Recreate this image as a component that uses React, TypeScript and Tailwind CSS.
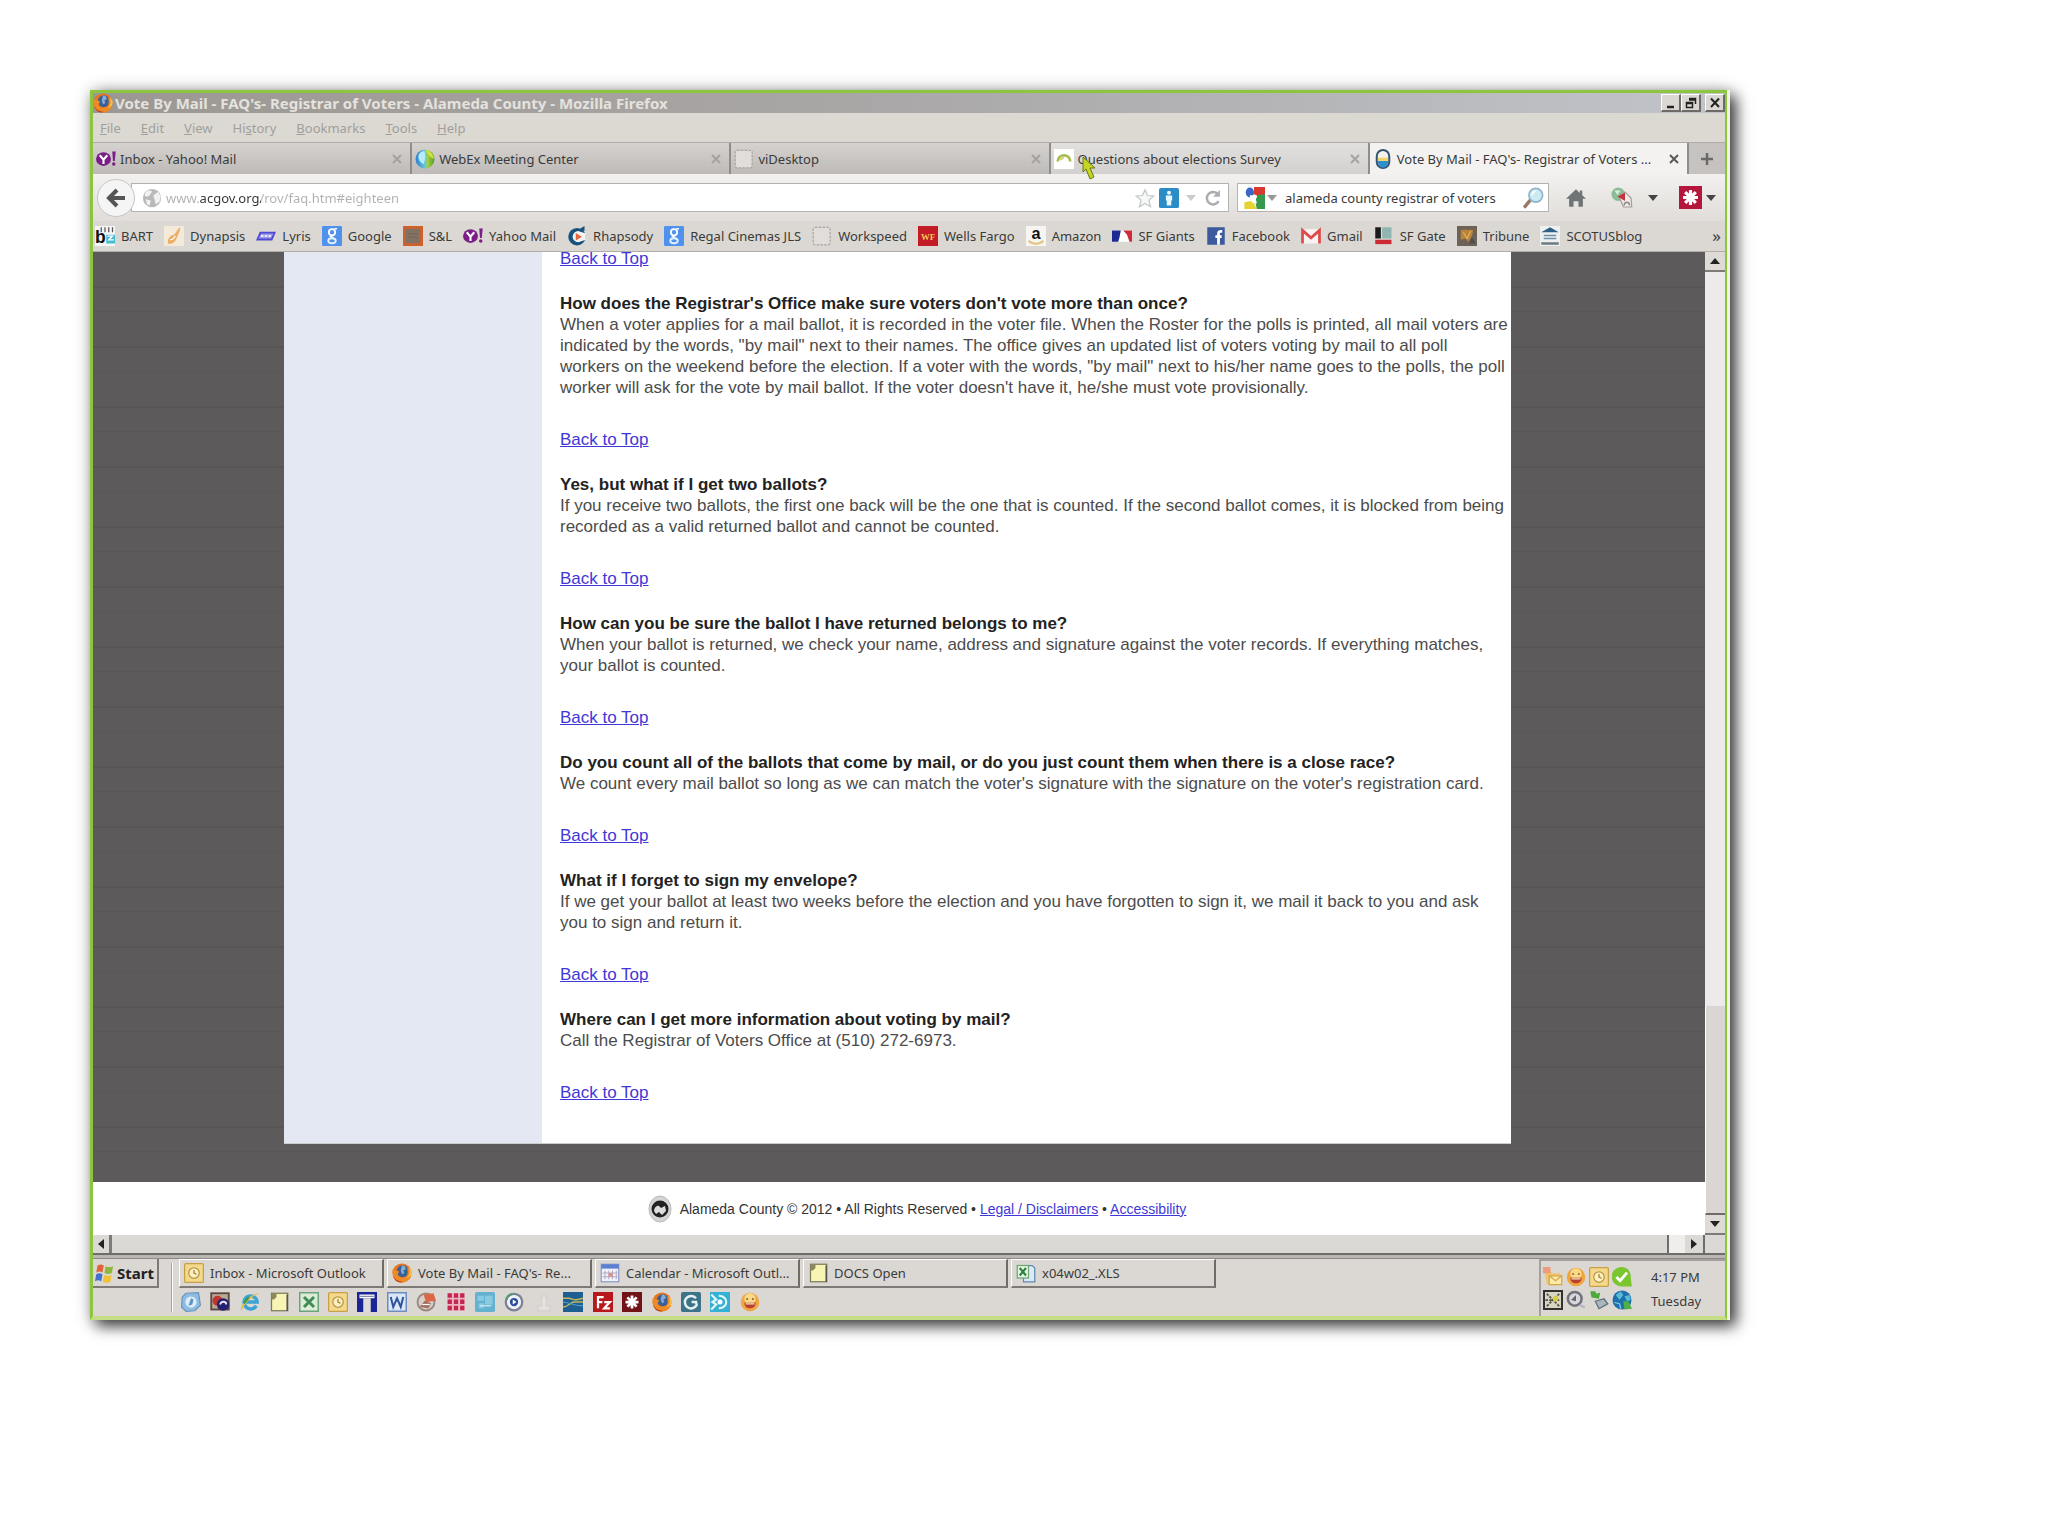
import React from "react";

type IconProps = { className?: string };

function Svg({ className = "size-5", children }: { className?: string; children: React.ReactNode }) {
  return (
    <svg viewBox="0 0 16 16" className={`${className} shrink-0`} aria-hidden="true">
      {children}
    </svg>
  );
}

const FirefoxIcon = ({ className }: IconProps) => (
  <Svg className={className}>
    <circle cx="8" cy="8" r="7.6" fill="#e8741c" />
    <circle cx="8.6" cy="6.6" r="4.8" fill="#3d5f98" />
    <path d="M8 2c2 0 3 1 3 3l-2 1 1 2-2 1-1-3z" fill="#84aed2" />
    <path d="M.5 5c1 1 2 0 3 1l2 .6c.6 1-1 1.400-1 2.600.6 2.600 4 3.400 6.600 1.800C12.600 10 13 7 12 3.600c3 2 4 5 2.800 7.800-2 4-8 5.600-12 2.600C.6 12 .2 8 .5 5z" fill="#ef8b26" />
    <path d="M12.500 3c2.600 2.500 2 7-1 9 2.600-.3 4.300-2 4.200-5-.3-1.600-1.400-3.200-3.200-4z" fill="#f6c14a" />
    <path d="M1 10c1 3 4 5 8 5-3 1.500-7 0-8-5z" fill="#bb3b1c" />
  </Svg>
);

const YahooIcon = ({ className }: IconProps) => (
  <Svg className={className}>
    <ellipse cx="6" cy="8" rx="6" ry="5.500" fill="#7b1f86" />
    <path d="M3 5l3 3.500L9 5M6 8.500V12" stroke="#fff" strokeWidth="1.700" fill="none" />
    <path d="M13 2h2.800l-.8 7.500h-1.400z" fill="#7b1f86" />
    <circle cx="14.200" cy="12" r="1.400" fill="#7b1f86" />
  </Svg>
);

const WebexIcon = () => (
  <Svg>
    <defs>
      <linearGradient id="webex" x1="0" x2="1">
        <stop offset="0" stopColor="#2f7fd0" />
        <stop offset=".5" stopColor="#6cc6d8" />
        <stop offset=".65" stopColor="#a5cf3a" />
        <stop offset="1" stopColor="#4f9e2c" />
      </linearGradient>
    </defs>
    <circle cx="8" cy="8" r="7.600" fill="url(#webex)" />
    <path d="M8.500 .6c4 .6 6.500 4 6.500 7.400-2-1-5-3-6.500-7.400z" fill="#cfe23f" />
    <path d="M3 4.500c1-2 3-3 4.500-3 1.300 3 .8 7-.5 10.500C4 11 2 7.500 3 4.500z" fill="#b7ecf6" />
  </Svg>
);

const BlankIcon = () => (
  <Svg>
    <rect x="1" y="1" width="13.500" height="14" rx="1.500" fill="#e0ddda" stroke="#a9a6a2" strokeDasharray="2 1" />
  </Svg>
);

const SurveyIcon = () => (
  <Svg>
    <rect width="16" height="16" fill="#fff" />
    <path d="M3 10a5 5 0 0 1 10 0" fill="none" stroke="#a9bd52" strokeWidth="2.200" />
    <path d="M5 9a4 4 0 0 1 3-2" fill="none" stroke="#d9c95c" strokeWidth="1.400" />
  </Svg>
);

const CountyIcon = () => (
  <Svg>
    <rect x="3" y=".8" width="10" height="14.400" rx="5" fill="#f4f2ea" stroke="#345473" strokeWidth="1.600" />
    <path d="M4 7h8v2.500H4z" fill="#f0d269" />
    <path d="M4 9.500h8V11a4 4 0 0 1-8 0z" fill="#2e8fc8" />
  </Svg>
);

const GlobeIcon = () => (
  <Svg>
    <circle cx="8" cy="8" r="7.300" fill="#b9b9b9" />
    <path d="M3 3c2-1 4-1.500 5 0L6 6 4 7 2 6zM9 6l4-3 2 4-1 4-3 2-1-4zM3 9l4 1-1 4-2-1z" fill="#f1f1f1" />
  </Svg>
);

const BartIcon = () => (
  <Svg>
    <rect width="16" height="16" fill="#f6f6f6" />
    <path d="M9 7h7v7H9z" fill="#45bcd0" />
    <path d="M5 1v4M8 1v4M11 1v4M14 1v4" stroke="#555" />
    <text x="0" y="13.500" fontSize="14" fontWeight="700" fontFamily="Liberation Sans" fill="#111">b</text>
    <path d="M10 8h4l-3 3h4" stroke="#fff" fill="none" />
  </Svg>
);
const DynapsisIcon = () => (
  <Svg>
    <rect width="16" height="16" fill="#f4ead9" />
    <path d="M13 1c-2 1-3 4-5 6-3 0-5 3-5 7 3 1 6-1 7-4 1-3 3-5 3-9z" fill="#edae65" />
    <path d="M5 11c2 0 3-1 4-3" stroke="#fff" fill="none" />
  </Svg>
);
const LyrisIcon = () => (
  <Svg>
    <path d="M3 4.500h13l-3 7H0z" fill="#5048d0" />
    <path d="M4 6h10l-2 4H2z" fill="#9c98ec" />
    <path d="M4 8h8" stroke="#e9e8ff" strokeWidth="1.500" strokeDasharray="2 1" />
  </Svg>
);
const GoogleIcon = () => (
  <Svg>
    <rect width="16" height="16" rx="1" fill="#4f92ee" />
    <circle cx="8" cy="5" r="2.500" fill="none" stroke="#fff" strokeWidth="1.500" />
    <path d="M10 2.200h2M9 7.500L7 8.500l3 2" stroke="#fff" strokeWidth="1.300" fill="none" />
    <ellipse cx="8" cy="11.800" rx="3" ry="2" fill="none" stroke="#e4efff" strokeWidth="1.500" />
  </Svg>
);
const SlIcon = () => (
  <Svg>
    <rect x="1" y="1" width="14" height="14" fill="#827264" stroke="#d1602a" strokeWidth="2.500" />
    <path d="M4 6h8M4 9h8" stroke="#75675c" />
  </Svg>
);
const RhapsodyIcon = () => (
  <Svg>
    <circle cx="8" cy="8.500" r="7" fill="#17527e" />
    <path d="M9 3l5-3v4z" fill="#17527e" />
    <path d="M9 4a4.500 4.500 0 1 0 0 9l6-2V6z" fill="#f2f4f4" />
    <path d="M7 5.500l5 3-5 3z" fill="#e5653d" />
  </Svg>
);
const WellsIcon = () => (
  <Svg>
    <rect width="16" height="16" fill="#c41c26" />
    <text x="8" y="11" fontSize="7" fontWeight="700" textAnchor="middle" fontFamily="Liberation Serif" fill="#f3cb52">WF</text>
  </Svg>
);
const AmazonIcon = () => (
  <Svg>
    <rect width="16" height="16" fill="#f7f5f1" />
    <text x="8" y="10" fontSize="13" fontWeight="700" textAnchor="middle" fontFamily="Liberation Sans" fill="#111">a</text>
    <path d="M2 12c4 3 8 3 12 0" stroke="#e4c685" strokeWidth="1.800" fill="none" />
  </Svg>
);
const MlbIcon = () => (
  <Svg>
    <rect y="3.500" width="16" height="9" rx="1" fill="#fff" />
    <path d="M0 3.500h7L6 9l-1 3.500H0z" fill="#1d2a91" />
    <path d="M9 3.500h7v9h-2L12 7z" fill="#d02b3c" />
  </Svg>
);
const FacebookIcon = () => (
  <Svg>
    <rect x="1" y="1" width="14" height="14" fill="#3d5a9c" />
    <path d="M13 4.200h-1.200C10.500 4.200 10 5 10 6v9M7.500 8.500h5" stroke="#fff" strokeWidth="2.200" fill="none" />
  </Svg>
);
const GmailIcon = () => (
  <Svg>
    <rect y="2.500" width="16" height="11.500" fill="#f8f3f2" />
    <path d="M1.200 14V3.500L8 9.500l6.800-6V14" stroke="#db4a4c" strokeWidth="2.200" fill="none" />
  </Svg>
);
const SfGateIcon = () => (
  <Svg>
    <rect x="1" y="1" width="4.500" height="9" fill="#1b1b1b" />
    <rect x="6.500" y="1" width="7.500" height="9" fill="#8fb6b3" />
    <rect x="1" y="11" width="13" height="3.500" fill="#cc2a33" />
  </Svg>
);
const TribuneIcon = () => (
  <Svg>
    <rect width="16" height="16" fill="#6c6258" />
    <path d="M3 3h10l-1 5-3 5-2-3-4 1z" fill="#b98438" />
    <path d="M5 5l3 5 3-6" stroke="#e1b25d" fill="none" />
    <path d="M12 9l3 5h-5z" fill="#4d4d4d" />
  </Svg>
);
const ScotusIcon = () => (
  <Svg>
    <rect width="16" height="16" fill="#eef0f0" />
    <path d="M1 5l7-4 7 4z" fill="#2f5f88" />
    <path d="M3 7.500h10M3 10h10" stroke="#6d8ea8" strokeWidth="1.200" />
    <path d="M1 13h14v2H1z" fill="#6d7a80" />
  </Svg>
);

const StarIcon = () => (
  <Svg>
    <path d="M8 1.500l2 4.500 5 .5-3.800 3.300L12.400 15 8 12.300 3.600 15l1.200-5.200L1 6.500 6 6z" fill="#f6f8f7" stroke="#c3c9c8" />
  </Svg>
);
const InfoIcon = () => (
  <Svg>
    <rect width="16" height="16" rx="1.500" fill="#2c8dc6" />
    <circle cx="8" cy="3.700" r="1.600" fill="#e8f8fc" />
    <path d="M5.500 6h5v4H9.800v4H6.200v-4h-.7z" fill="#e8f8fc" />
  </Svg>
);
const ReloadIcon = () => (
  <Svg>
    <path d="M12.500 10.500A5 5 0 1 1 12 5" stroke="#adadad" strokeWidth="2" fill="none" />
    <path d="M13.500 1.500V7H8z" fill="#adadad" />
  </Svg>
);
const GoogleSearchIcon = () => (
  <Svg className="size-[22px]">
    <rect width="16" height="16" fill="#fff" />
    <path d="M8 0h8v6l-4 2-4-3z" fill="#d9392f" />
    <path d="M10 6l6-1v11h-6l-1-5z" fill="#35984b" />
    <path d="M1 11l6-1 3 6H1z" fill="#e5d331" />
    <ellipse cx="5" cy="4" rx="3" ry="3.600" fill="#3a66c9" />
    <path d="M7 8c2 0 3 2 3 4l-4-1zM5 6h5v2H5z" fill="#fff" />
  </Svg>
);
const MagnifierIcon = () => (
  <Svg className="size-[22px]">
    <path d="M1.500 15l5-6" stroke="#9a7765" strokeWidth="2.400" />
    <circle cx="10" cy="6" r="5" fill="#cdeaf4" stroke="#8fb5c8" strokeWidth="1.200" />
    <path d="M7.500 6c0-2 1-2.800 2.500-3" stroke="#fff" strokeWidth="1.200" fill="none" />
  </Svg>
);
const HomeIcon = () => (
  <Svg>
    <path d="M8 1L0 8.500h2.500V15H6v-4.500h4V15h3.500V8.500H16L13 5.700V2h-2v1.900z" fill="#6f7476" />
  </Svg>
);
const PageToolIcon = () => (
  <Svg className="size-6">
    <circle cx="5.500" cy="5.500" r="4.500" fill="#8cbd97" />
    <path d="M3 3h4l-2 3z" fill="#d8efdc" />
    <path d="M6 7l4-3 4 4 .5 6H9z" fill="#efeceb" stroke="#a39d9b" strokeWidth=".8" />
    <path d="M5 7l5-2.500V10z" fill="#c5343c" />
    <path d="M9.500 13c0-3 3.500-3 3.500 0" stroke="#908c8c" fill="none" />
  </Svg>
);
const StarburstIcon = ({ className = "size-5", tone = "#b5173c" }: { className?: string; tone?: string }) => (
  <Svg className={className}>
    <rect width="16" height="16" fill={tone} />
    <path d="M8 2.800v10.400M2.800 8h10.400M4.300 4.300l7.400 7.400M11.700 4.300l-7.400 7.400" stroke="#fff" strokeWidth="2.200" />
  </Svg>
);
const Caret = ({ className = "text-[#444]" }: IconProps) => (
  <svg viewBox="0 0 10 6" className={`${className} h-[6px] w-[10px] shrink-0`} aria-hidden="true">
    <path d="M0 0h10L5 6z" fill="currentColor" />
  </svg>
);

const OutlookIcon = () => (
  <Svg>
    <rect x=".5" y=".5" width="15" height="15" rx="1" fill="#f3d98c" stroke="#c99f48" />
    <circle cx="8" cy="8" r="4.200" fill="#fbf0c4" stroke="#bd9641" />
    <path d="M8 5.500V8l2 1" stroke="#a67c2c" fill="none" />
  </Svg>
);
const CalendarIcon = () => (
  <Svg>
    <rect x="1" y="1" width="14" height="14" fill="#f0f3fb" stroke="#8a9cc8" />
    <rect x="1" y="1" width="14" height="3.500" fill="#5b80cf" />
    <path d="M4 6v7M7 6v7M10 6v7M13 6v7M2 8h12M2 11h12" stroke="#b3a9bf" strokeWidth=".8" />
    <path d="M7 8h3v3H7z" fill="#e28c87" />
  </Svg>
);
const DocsIcon = () => (
  <Svg>
    <rect x="2" y="1" width="13" height="14" fill="#f8f5b4" stroke="#7d7a5c" />
    <path d="M2 1h4v3l-2 2H2z" fill="#8b8a5c" />
    <path d="M14.500 2v13" stroke="#444" />
  </Svg>
);
const XlsIcon = () => (
  <Svg>
    <path d="M6 2h7l2 2v11H6z" fill="#dfe9f5" stroke="#5c8ab6" />
    <rect x="1" y="2" width="9" height="10" fill="#e7f4e4" stroke="#6aa873" />
    <path d="M3 4l5 6M8 4l-5 6" stroke="#2e8240" strokeWidth="1.700" />
  </Svg>
);
const ExcelIcon = () => (
  <Svg>
    <rect x=".6" y=".6" width="14.800" height="14.800" fill="#dcecd9" stroke="#6ba37b" strokeWidth="1.200" />
    <path d="M4 4l8 8M12 4l-8 8" stroke="#3f8c55" strokeWidth="2.400" />
  </Svg>
);
const WordIcon = () => (
  <Svg>
    <rect x=".6" y=".6" width="14.800" height="14.800" fill="#dbe6f6" stroke="#6d8cc0" strokeWidth="1.200" />
    <path d="M3 4l2 8 3-7 3 7 2-8" stroke="#2c539c" strokeWidth="1.600" fill="none" />
  </Svg>
);
const WindowsIcon = () => (
  <Svg>
    <path d="M2 2c2-1 3-1 5 0L6 7.500c-2-1-3-1-5 0z" fill="#e0653a" />
    <path d="M8.500 2.500c2 1 4 1 6 0L13.500 8c-2 1-4 1-6 0z" fill="#8db83e" />
    <path d="M1 9c2-1 3-1 5 0l-1 5.500c-2-1-3-1-5 0z" fill="#4272cc" />
    <path d="M7.300 9.500c2 1 4 1 6 0l-1 5.500c-2 1-4 1-6 0z" fill="#eec33a" />
  </Svg>
);
const DesktopIcon = () => (
  <Svg>
    <path d="M4 1l10-.5 1.500 10L11 15l-7 .5L.5 12 1 4z" fill="#8fbce2" stroke="#6796c0" />
    <circle cx="8" cy="8" r="4.500" fill="#dcedf7" />
    <path d="M8 5l2 1-1 4-3 1 1-3z" fill="#5a94c4" />
  </Svg>
);
const GroupIcon = () => (
  <Svg>
    <rect x="1" y="1" width="14" height="13" fill="#b9a992" stroke="#5b4a42" strokeWidth="1.500" />
    <circle cx="6" cy="7" r="4" fill="#c03532" />
    <circle cx="10.500" cy="10" r="5" fill="#25236f" />
    <path d="M8 10c1-3 5-3 5 0" stroke="#e7e3f2" strokeWidth="1.500" fill="none" />
  </Svg>
);
const IeIcon = () => (
  <Svg>
    <path d="M13 11a5.200 5.200 0 1 1 .7-3H4" stroke="#3ba4d4" strokeWidth="2.800" fill="none" />
    <path d="M1 15C-1 11 9 1 15 1c-1 1-3 1-5 3C6 7 3 11 1 15z" fill="#e6bd3c" />
    <path d="M3 9l4-5" stroke="#3b9b52" strokeWidth="2" />
  </Svg>
);
const GateIcon = () => (
  <Svg>
    <rect width="16" height="16" fill="#1b2494" />
    <path d="M2 2h12v3H2z" fill="#fff" />
    <path d="M5 5h6v11H5z" fill="#dddcd9" />
    <path d="M2.500 3.500h11" stroke="#8287bd" />
  </Svg>
);
const GaugeIcon = () => (
  <Svg>
    <circle cx="8" cy="8" r="6.800" fill="#d8cfc7" stroke="#998780" strokeWidth="1.500" />
    <path d="M8 8l-2-6 8-1 2 6z" fill="#dc6746" />
    <path d="M3 12l4-5 5 2-2 4z" fill="#a06e63" />
    <path d="M5 10h6" stroke="#fff" />
  </Svg>
);
const DotsIcon = () => (
  <Svg>
    <rect x="1" y="1" width="14" height="14" fill="#ebb4c0" />
    <path d="M3 1v14M8 1v14M13 1v14" stroke="#c32750" strokeWidth="3.400" strokeDasharray="3.600 1.400" />
  </Svg>
);
const PanelIcon = () => (
  <Svg>
    <rect width="16" height="16" rx="1.500" fill="#64b2cf" />
    <path d="M2 3h5v4H2zM8 3h6v7H8zM3 9h4v4H3z" fill="#88cbe0" />
    <path d="M4 11h9" stroke="#c8eaf3" />
  </Svg>
);
const PlayerIcon = () => (
  <Svg>
    <circle cx="8" cy="8" r="6.600" fill="#f0f3f8" stroke="#7b8296" strokeWidth="1.800" />
    <path d="M2 6a6.500 6.500 0 0 1 5-4.500" stroke="#4f9e6a" strokeWidth="1.500" fill="none" />
    <circle cx="8" cy="8" r="3.300" fill="#2a4c9c" />
    <path d="M7 6l3 2-3 2z" fill="#fff" />
  </Svg>
);
const GhostIcon = () => (
  <Svg>
    <path d="M6 3h4v8h3v4H3v-4h3z" fill="#e3e0dd" stroke="#d2cfcc" />
  </Svg>
);
const BridgeIcon = () => (
  <Svg>
    <rect width="16" height="16" fill="#1f5e92" />
    <path d="M0 5h5c2 0 4 3 11 0M0 12c4 0 6-4 9-4h7" stroke="#c1b855" strokeWidth="1.200" fill="none" />
    <path d="M0 8c5 0 7 3 16 3" stroke="#4da0c4" fill="none" />
  </Svg>
);
const FilezillaIcon = () => (
  <Svg>
    <rect width="16" height="16" fill="#b8181c" />
    <path d="M4 13V4h4.500M4 8h3.500M9 8h4.500L9 13h4.500" stroke="#fff" strokeWidth="1.800" fill="none" />
  </Svg>
);
const SwirlIcon = () => (
  <Svg>
    <rect width="16" height="16" rx="1.500" fill="#3c7389" />
    <path d="M12 5a5 5 0 1 0 .5 5.500L12 8H8.500" stroke="#e4f2f3" strokeWidth="2" fill="none" />
  </Svg>
);
const EyeIcon = () => (
  <Svg>
    <rect width="16" height="16" fill="#35b2d3" />
    <path d="M1 2l4 4-3 2 3 2-4 4M7 3c8 0 8 10 0 10" stroke="#e6f8fc" strokeWidth="1.700" fill="none" />
    <circle cx="8" cy="8" r="2" fill="#fff" />
  </Svg>
);
const SmileIcon = () => (
  <Svg>
    <circle cx="8" cy="8" r="7.400" fill="#f0a540" />
    <circle cx="8" cy="5.500" r="4.500" fill="#fad98a" />
    <path d="M3.500 8.500h9c0 3-2 4.500-4.500 4.500s-4.500-1.500-4.500-4.500z" fill="#b8402f" />
    <path d="M4.500 9h7v1h-7z" fill="#f7e3c0" />
    <circle cx="5.700" cy="5.500" r=".8" fill="#8a5a2a" />
    <circle cx="10.300" cy="5.500" r=".8" fill="#8a5a2a" />
  </Svg>
);
const MailFolderIcon = () => (
  <Svg>
    <path d="M1 3h5l1 2h7v9H3z" fill="#efc46b" />
    <path d="M0 0h6v5H0z" fill="#ef9b7b" />
    <path d="M5 7h10v7H5z" fill="#fbeaa8" stroke="#d6a548" />
    <path d="M5 7l5 4 5-4" stroke="#d6a548" fill="none" />
  </Svg>
);
const CheckIcon = () => (
  <Svg>
    <path d="M7 0c5 0 8 3 8 8l.8 7.500H8a7.600 7.600 0 0 1-1-15.500z" fill="#79c62e" />
    <path d="M3.500 8l3 3L12 4.500" stroke="#fff" strokeWidth="2.300" fill="none" />
  </Svg>
);
const NetworkIcon = () => (
  <Svg>
    <rect x=".8" y=".8" width="14.400" height="14.400" fill="#d8d6c0" stroke="#33312f" strokeWidth="1.600" />
    <path d="M3 3l10 10M13 3L3 13M2 8h12" stroke="#55534b" strokeWidth="1.400" strokeDasharray="2 1" />
    <circle cx="10" cy="7" r="2.200" fill="#d8cf3c" />
  </Svg>
);
const VolumeIcon = () => (
  <Svg>
    <circle cx="7" cy="7" r="5.500" fill="#d8d7dd" stroke="#73727c" strokeWidth="2" />
    <path d="M4 8l4-4v5z" fill="#66656f" />
    <path d="M11 12l4 2" stroke="#b7b5c6" strokeWidth="2" />
  </Svg>
);
const RemoveIcon = () => (
  <Svg>
    <path d="M1 1h4l1 2 3-1-1 5-6-1z" fill="#4eab3b" />
    <path d="M5 9l7-2 3 4-7 4z" fill="#a9b6bd" stroke="#5d6d76" />
  </Svg>
);
const EarthIcon = () => (
  <Svg>
    <circle cx="8" cy="8" r="7.600" fill="#1d6fae" />
    <path d="M3 4l4-3 2 3-3 4zM10 5l4-1 1 4-3 1z" fill="#55bdd3" />
    <path d="M9 9h4l3 6-6 .5z" fill="#4fb242" />
    <path d="M2 10l4 1 1 4" stroke="#7bd2e2" fill="none" />
  </Svg>
);

const UI = "font-['Noto_Sans','Liberation_Sans',sans-serif]";

const MENUS: [string, string, string][] = [
  ["", "F", "ile"],
  ["", "E", "dit"],
  ["", "V", "iew"],
  ["Hi", "s", "tory"],
  ["", "B", "ookmarks"],
  ["", "T", "ools"],
  ["", "H", "elp"],
];

const BOOKMARKS: [string, () => React.ReactElement][] = [
  ["BART", BartIcon],
  ["Dynapsis", DynapsisIcon],
  ["Lyris", LyrisIcon],
  ["Google", GoogleIcon],
  ["S&L", SlIcon],
  ["Yahoo Mail", () => <YahooIcon />],
  ["Rhapsody", RhapsodyIcon],
  ["Regal Cinemas JLS", GoogleIcon],
  ["Workspeed", BlankIcon],
  ["Wells Fargo", WellsIcon],
  ["Amazon", AmazonIcon],
  ["SF Giants", MlbIcon],
  ["Facebook", FacebookIcon],
  ["Gmail", GmailIcon],
  ["SF Gate", SfGateIcon],
  ["Tribune", TribuneIcon],
  ["SCOTUSblog", ScotusIcon],
];

const FAQS = [
  {
    q: "How does the Registrar's Office make sure voters don't vote more than once?",
    a: [
      "When a voter applies for a mail ballot, it is recorded in the voter file. When the Roster for the polls is printed, all mail voters are",
      "indicated by the words, \"by mail\" next to their names. The office gives an updated list of voters voting by mail to all poll",
      "workers on the weekend before the election. If a voter with the words, \"by mail\" next to his/her name goes to the polls, the poll",
      "worker will ask for the vote by mail ballot. If the voter doesn't have it, he/she must vote provisionally.",
    ],
  },
  {
    q: "Yes, but what if I get two ballots?",
    a: [
      "If you receive two ballots, the first one back will be the one that is counted. If the second ballot comes, it is blocked from being",
      "recorded as a valid returned ballot and cannot be counted.",
    ],
  },
  {
    q: "How can you be sure the ballot I have returned belongs to me?",
    a: [
      "When your ballot is returned, we check your name, address and signature against the voter records. If everything matches,",
      "your ballot is counted.",
    ],
  },
  {
    q: "Do you count all of the ballots that come by mail, or do you just count them when there is a close race?",
    a: ["We count every mail ballot so long as we can match the voter's signature with the signature on the voter's registration card."],
  },
  {
    q: "What if I forget to sign my envelope?",
    a: [
      "If we get your ballot at least two weeks before the election and you have forgotten to sign it, we mail it back to you and ask",
      "you to sign and return it.",
    ],
  },
  {
    q: "Where can I get more information about voting by mail?",
    a: ["Call the Registrar of Voters Office at (510) 272-6973."],
  },
];

const TASKS: [string, () => React.ReactElement][] = [
  ["Inbox - Microsoft Outlook", OutlookIcon],
  ["Vote By Mail - FAQ's- Re...", () => <FirefoxIcon />],
  ["Calendar - Microsoft Outl...", CalendarIcon],
  ["DOCS Open", DocsIcon],
  ["x04w02_.XLS", XlsIcon],
];

const QUICK: [string, () => React.ReactElement][] = [
  ["Show Desktop", DesktopIcon],
  ["GroupWise", GroupIcon],
  ["Internet Explorer", IeIcon],
  ["DOCS", DocsIcon],
  ["Excel", ExcelIcon],
  ["Outlook", OutlookIcon],
  ["Gate", GateIcon],
  ["Word", WordIcon],
  ["Gauge", GaugeIcon],
  ["Grid", DotsIcon],
  ["Panel", PanelIcon],
  ["Player", PlayerIcon],
  ["Tool", GhostIcon],
  ["Bridge", BridgeIcon],
  ["FileZilla", FilezillaIcon],
  ["Starburst", () => <StarburstIcon tone="#701216" />],
  ["Firefox", () => <FirefoxIcon />],
  ["Swirl", SwirlIcon],
  ["Viewer", EyeIcon],
  ["Messenger", SmileIcon],
];

const TRAY = [MailFolderIcon, SmileIcon, OutlookIcon, CheckIcon, NetworkIcon, VolumeIcon, RemoveIcon, EarthIcon];

function Tab({ title, icon, tone = "bg-linear-to-b from-[#d5d2cf] to-[#bdbab7]", active = false, children }: {
  title: string; icon: React.ReactNode; tone?: string; active?: boolean; children?: React.ReactNode;
}) {
  return (
    <div className={`relative flex min-w-0 flex-1 items-center border-r-2 border-[#8f8c89] pr-2 pl-[3px] ${active ? "bg-[#f3f2f0]" : tone}`}>
      <button role="tab" aria-selected={active} className="flex min-w-0 flex-1 items-center gap-1 text-left whitespace-nowrap">
        {icon}
        <span>{title}</span>
      </button>
      <button aria-label={`Close ${title}`} className={active ? "text-[#5a5a5a]" : "text-[#a5a29f]"}>
        <svg viewBox="0 0 10 10" className="size-[10px]"><path d="M1 1l8 8M9 1L1 9" stroke="currentColor" strokeWidth="2" /></svg>
      </button>
      {children}
    </div>
  );
}

function WinButton({ label, children }: { label: string; children: React.ReactNode }) {
  return (
    <button aria-label={label} className="flex h-[18px] w-5 items-center justify-center border-t border-l border-r-2 border-b-2 border-t-white border-l-white border-r-[#6d6a67] border-b-[#6d6a67] bg-[#dbd8d3]">
      <svg viewBox="0 0 12 12" className="size-3">{children}</svg>
    </button>
  );
}

function BackToTop() {
  return <a href="#top" className="text-[#3f38d8] underline">Back to Top</a>;
}

export default function App() {
  return (
    <main className="min-h-screen bg-white pt-[90px] pr-[318px] pb-10 pl-[90px]">
      <div className="bg-[#eff5e2] pr-[3px] shadow-[6px_6px_14px_rgba(0,0,0,0.75),0_0_16px_rgba(0,0,0,0.2)]">
        <div className={`${UI} border-t-[3px] border-r-2 border-b-4 border-l-[3px] border-t-[#8cc63f] border-r-[#8cc63f] border-b-[#c5dd84] border-l-[#8cc63f] bg-[#dbd8d3] text-[13px] leading-5 text-[#3a3a3a]`}>
          <header>
            <div className="flex h-5 items-center justify-between bg-linear-to-r from-[#9c9792] via-[#aaa8a8] to-[#c1c4ca]">
              <h1 className="flex items-center gap-[2px] text-[15px] font-bold text-[#e4e2de]">
                <FirefoxIcon />
                Vote By Mail - FAQ's- Registrar of Voters - Alameda County - Mozilla Firefox
              </h1>
              <div className="flex">
                <WinButton label="Minimize"><path d="M2 10h7" stroke="#222" strokeWidth="2.500" /></WinButton>
                <WinButton label="Restore"><path d="M4 1.500h6.500V7M4 3h6M1.500 5.500h6v5h-6zM1.500 6.500h6" stroke="#222" strokeWidth="1.500" fill="none" /></WinButton>
                <div className="w-1" />
                <WinButton label="Close"><path d="M2 1.500l8 8.500M10 1.500L2 10" stroke="#222" strokeWidth="2" /></WinButton>
              </div>
            </div>

            <nav aria-label="Menu" className="flex h-[29px] items-center gap-5 bg-[#dcd9d3] pl-[7px] text-[#a19f9b]">
              {MENUS.map(([a, b, c]) => (
                <button key={b + c}>{a}<span className="underline">{b}</span>{c}</button>
              ))}
            </nav>

            <div role="tablist" className="flex h-8 border-t border-[#aeaba8]">
              <Tab title="Inbox - Yahoo! Mail" icon={<YahooIcon />} />
              <Tab title="WebEx Meeting Center" icon={<WebexIcon />} />
              <Tab title="viDesktop" icon={<BlankIcon />} />
              <Tab title="Questions about elections Survey" icon={<SurveyIcon />} tone="bg-linear-to-b from-[#e2e0de] to-[#d3d1cf]">
                <svg viewBox="0 0 14 24" className="absolute top-[13px] left-[31px] h-6 w-[14px]" aria-hidden="true">
                  <path d="M1 1v15l3-3 4 10 4-2-4-9h5z" fill="#c6d522" stroke="#6c7516" />
                </svg>
              </Tab>
              <Tab title="Vote By Mail - FAQ's- Registrar of Voters ..." icon={<CountyIcon />} active />
              <button aria-label="New tab" className="flex w-9 items-center justify-center bg-[#c5c2bf] text-[#6a6a6a]">
                <svg viewBox="0 0 12 12" className="size-3"><path d="M6 0v12M0 6h12" stroke="currentColor" strokeWidth="2.500" /></svg>
              </button>
            </div>

            <div className="flex h-[47px] items-center bg-linear-to-b from-[#f2f1ef] to-[#e0ddd9] pr-[9px] pl-1">
              <button aria-label="Back" className="z-10 flex size-[38px] items-center justify-center rounded-full border border-[#c8c6c4] bg-[#f5f5f6]">
                <svg viewBox="0 0 20 20" className="size-5"><path d="M19 10H4M11 2L3 10l8 8" stroke="#555" strokeWidth="4" fill="none" /></svg>
              </button>
              <div className="-ml-1 flex h-[29px] flex-1 items-center gap-1 border border-[#b5b2af] bg-white pr-[5px] pl-[10px]">
                <GlobeIcon />
                <input aria-label="Address" defaultValue="www.acgov.org/rov/faq.htm#eighteen" className="min-w-0 flex-1 bg-linear-[90deg,#b0b0b0_0,#b0b0b0_33px,#333_33px,#333_95px,#b0b0b0_95px] bg-clip-text text-transparent outline-none" />
                <StarIcon />
                <InfoIcon />
                <Caret className="mx-[3px] text-[#ccc]" />
                <ReloadIcon />
              </div>
              <div className="ml-2 flex h-[29px] w-[312px] items-center gap-[2px] border border-[#b5b2af] bg-white pr-1 pl-[5px]">
                <GoogleSearchIcon />
                <Caret className="text-[#999]" />
                <input aria-label="Search" defaultValue="alameda county registrar of voters" className="ml-[6px] min-w-0 flex-1 outline-none" />
                <button aria-label="Go"><MagnifierIcon /></button>
              </div>
              <div className="ml-[17px] flex items-center">
                <button aria-label="Home"><HomeIcon /></button>
                <button aria-label="Page tools" className="ml-[24px] flex items-center gap-[14px]"><PageToolIcon /><Caret /></button>
                <button aria-label="Add-on" className="ml-[21px] flex items-center gap-1"><StarburstIcon className="size-[23px]" /><Caret /></button>
              </div>
            </div>

            <nav aria-label="Bookmarks" className="flex h-[31px] items-center border-b border-[#aeaba8] bg-[#dbd8d3] pr-1 pl-[2px]">
              <div className="flex flex-1 justify-between pr-[70px]">
                {BOOKMARKS.map(([name, Icon]) => (
                  <a key={name} href="#bookmark" className="flex items-center gap-[6px] whitespace-nowrap"><Icon />{name}</a>
                ))}
              </div>
              <button aria-label="More bookmarks" className="text-[17px]">»</button>
            </nav>
          </header>

          <div className="flex">
            <div className="min-w-0 flex-1">
              <div className="bg-[#5c5a5b] bg-[repeating-linear-gradient(180deg,transparent_0,transparent_34px,#575556_34px,#575556_36px,transparent_36px,transparent_59px,#585657_59px,#585657_60px)] pr-[194px] pb-[38px] pl-[191px]">
                <div className="flex border-b border-[#ccc] bg-white">
                  <aside className="w-[258px] shrink-0 bg-[#e4e8f3]" />
                  <article className="min-w-0 flex-1 pb-10 pl-[18px] font-['Liberation_Sans',Arial,sans-serif] text-[17px] leading-[21px] text-[#4c4c4c]">
                    <p className="-mt-[4px]"><BackToTop /></p>
                    {FAQS.map((f) => (
                      <section key={f.q} className="mt-6 whitespace-nowrap">
                        <h2 className="font-bold text-[#222]">{f.q}</h2>
                        {f.a.map((line) => <p key={line}>{line}</p>)}
                        <p className="mt-[31px]"><BackToTop /></p>
                      </section>
                    ))}
                  </article>
                </div>
              </div>
              <footer className="flex h-[53px] items-center justify-center gap-2 bg-white pl-9 font-['Liberation_Sans',Arial,sans-serif] text-[14px] text-[#333]">
                <svg viewBox="0 0 24 28" className="h-7 w-6" aria-hidden="true">
                  <ellipse cx="12" cy="14" rx="11" ry="13" fill="#d4d4d4" stroke="#bbb" />
                  <circle cx="12" cy="14" r="8.500" fill="#222" />
                  <path d="M6 16c0-3 3-6 5-5l2 2 4-2 1 5-4 4-3-3-3 2z" fill="#ddd" />
                </svg>
                <p>
                  Alameda County © 2012 • All Rights Reserved • <a href="#legal" className="text-[#3f38d8] underline">Legal / Disclaimers</a> • <a href="#accessibility" className="text-[#3f38d8] underline">Accessibility</a>
                </p>
              </footer>
            </div>
            <div className="flex w-5 shrink-0 flex-col bg-[#ecebe9]">
              <button aria-label="Scroll up" className="flex h-5 items-center justify-center border-b-2 border-[#7d7a77] bg-[#dedbd7]"><Caret className="rotate-180 text-[#222]" /></button>
              <div className="flex-1" />
              <div className="h-[209px] border-b-2 border-l border-b-[#6f6c69] border-l-white bg-[#d9d6d3]" />
              <button aria-label="Scroll down" className="flex h-5 items-center justify-center border-b-2 border-[#7d7a77] bg-[#dedbd7]"><Caret className="text-[#222]" /></button>
            </div>
          </div>

          <div className="flex h-5 border-b-2 border-[#6f6c69] bg-[#dbd9d5]">
            <button aria-label="Scroll left" className="flex w-[19px] items-center justify-center border-r-[3px] border-[#7d7a77]"><Caret className="rotate-90 text-[#222]" /></button>
            <div className="flex-1 border-r-2 border-[#6f6c69]" />
            <div className="w-4 bg-[#efeeec]" />
            <button aria-label="Scroll right" className="flex w-5 items-center justify-center border-r-2 border-[#6f6c69]"><Caret className="-rotate-90 text-[#222]" /></button>
            <div className="w-5" />
          </div>
          <div className="h-1 border-b border-[#8d8a87] bg-[#b9b6b3]" />

          <footer className="flex justify-between">
            <div className="flex">
              <button className="flex h-[29px] w-[66px] items-center gap-[2px] border-r-2 border-b-2 border-[#7d7a77] pl-[2px] text-[15px] font-bold text-[#222]"><WindowsIcon />Start</button>
              <div className="my-1 mr-[6px] ml-3 w-[2px] border-r border-white bg-[#a5a29f]" />
              <div className="flex flex-col">
                <div className="flex gap-[3px]">
                  {TASKS.map(([name, Icon]) => (
                    <button key={name} className="flex h-[29px] w-[205px] items-center gap-[6px] border-t border-r-2 border-b-2 border-l border-t-white border-r-[#6f6c69] border-b-[#7d7a77] border-l-white pl-1 whitespace-nowrap"><Icon />{name}</button>
                  ))}
                </div>
                <div className="flex h-7 w-[581px] items-center justify-between pl-[2px]">
                  {QUICK.map(([name, Icon]) => <button key={name} aria-label={name}><Icon /></button>)}
                </div>
              </div>
            </div>
            <div className="flex w-[186px] items-center border-t-2 border-l-2 border-[#a3a09d] pl-[2px]">
              <div className="grid grid-cols-4 gap-[3px]">
                {TRAY.map((Icon, i) => <Icon key={i} />)}
              </div>
              <div className="ml-[19px] leading-6">
                <p>4:17 PM</p>
                <p>Tuesday</p>
              </div>
            </div>
          </footer>
        </div>
      </div>
    </main>
  );
}
